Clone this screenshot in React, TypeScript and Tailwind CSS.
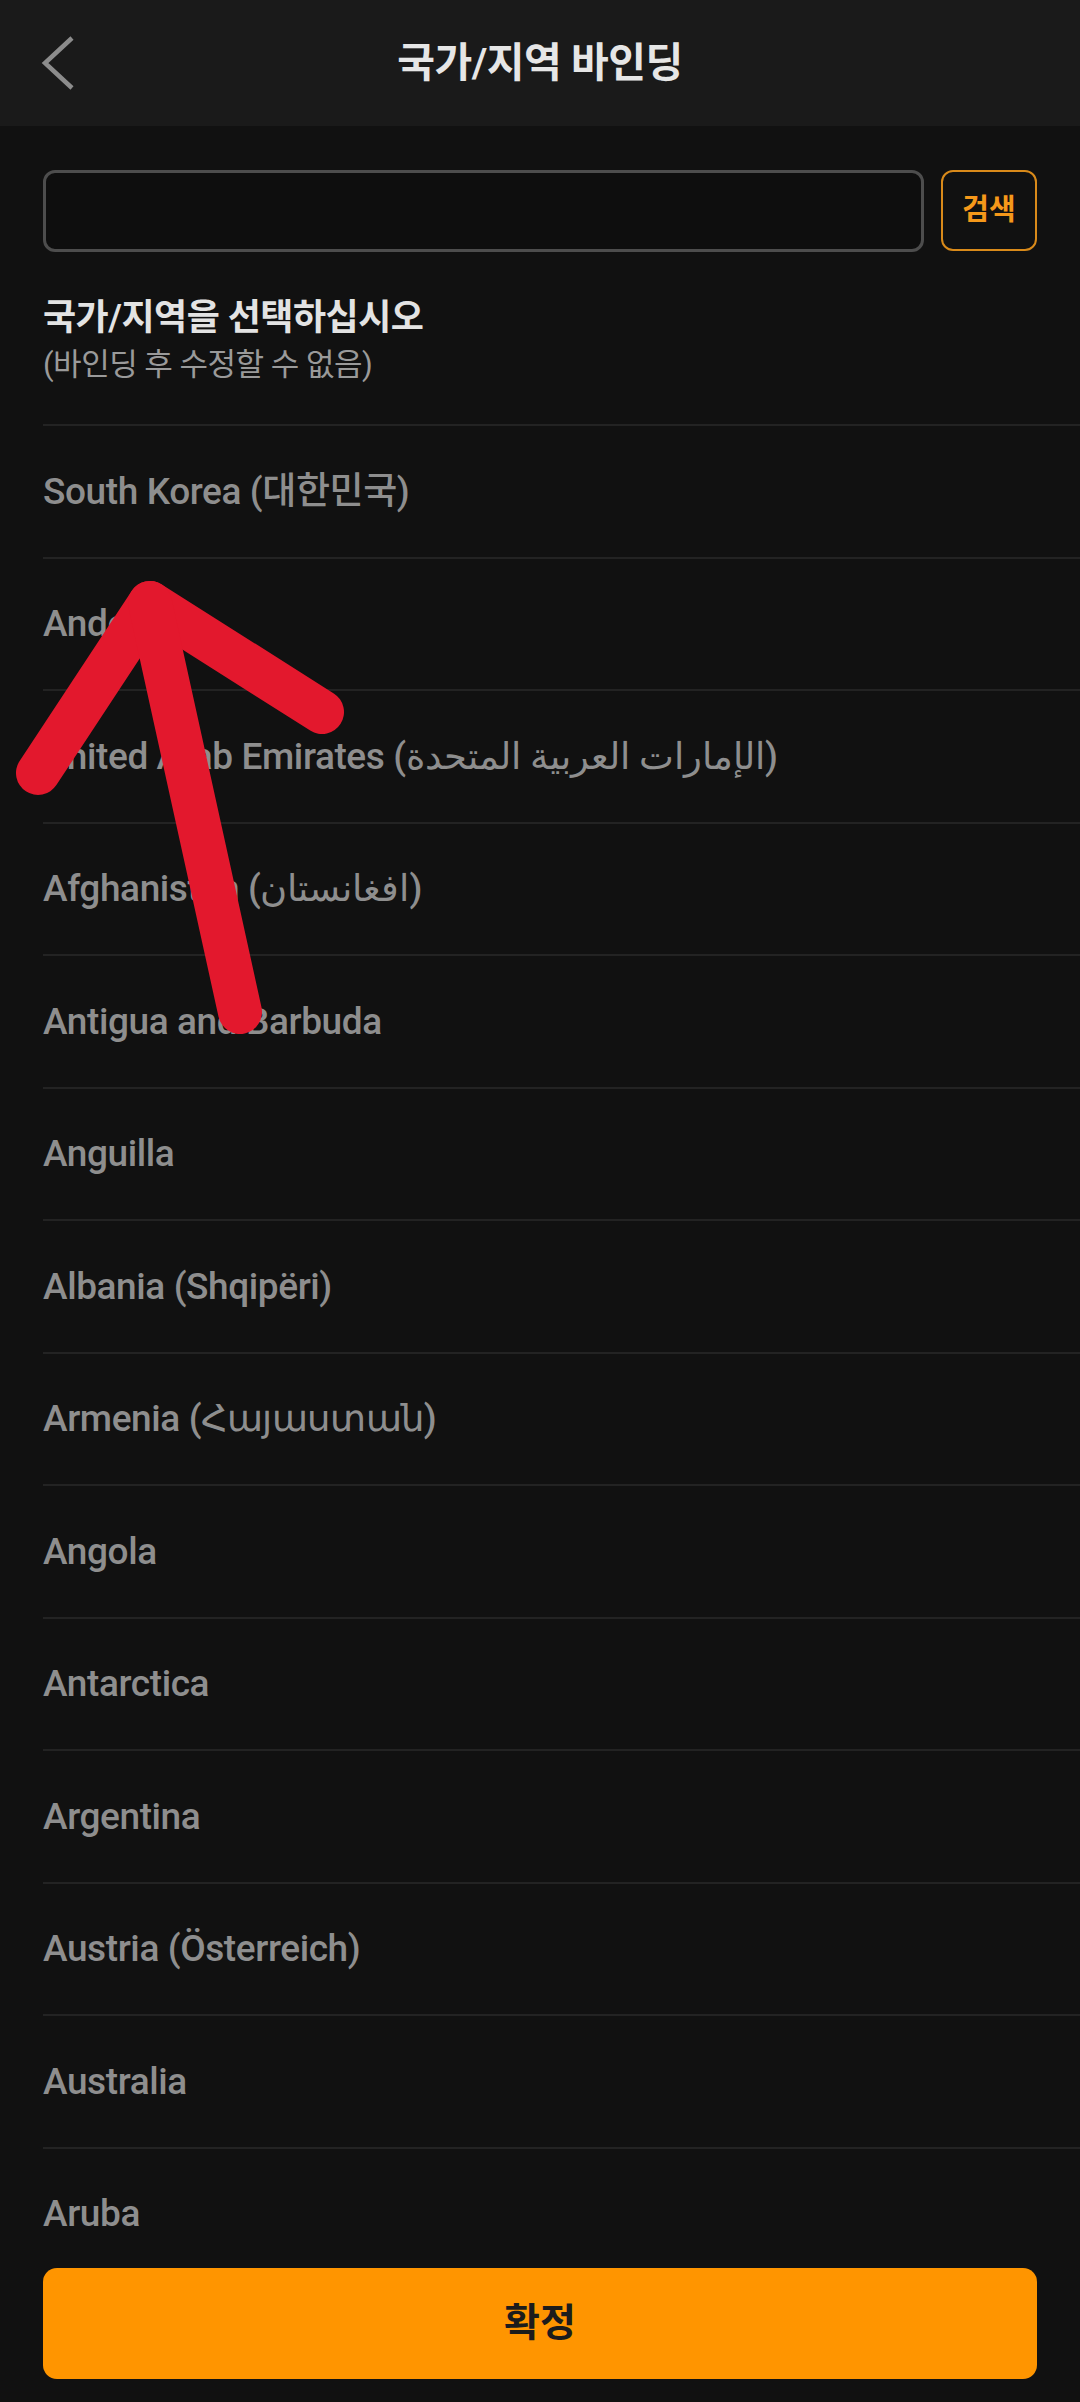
import React from "react";

const countries = [
  "South Korea (대한민국)",
  "Andorra",
  "United Arab Emirates (الإمارات العربية المتحدة)",
  "Afghanistan (افغانستان)",
  "Antigua and Barbuda",
  "Anguilla",
  "Albania (Shqipëri)",
  "Armenia (Հայաստան)",
  "Angola",
  "Antarctica",
  "Argentina",
  "Austria (Österreich)",
  "Australia",
  "Aruba",
];

export default function App() {
  return (
    <div className="relative w-[1080px] h-[2402px] overflow-hidden bg-[#111111] font-['Roboto','Noto_Sans_CJK_KR','Noto_Sans',sans-serif]">
      {/* Header */}
      <div className="grid grid-cols-[1fr_auto_1fr] items-center h-[126px] bg-[#1a1a1a]">
        <div className="pl-[40px] flex items-center">
          <svg width="40" height="56" viewBox="0 0 40 56" fill="none">
            <polyline points="32,3 5,28 32,53" stroke="#8c8c8c" strokeWidth="4.5" strokeLinecap="butt" strokeLinejoin="miter" />
          </svg>
        </div>
        <div className="text-[41px] font-semibold text-[#e6e6e6] leading-none tracking-[-0.5px]">국가/지역 바인딩</div>
        <div />
      </div>

      {/* Search row */}
      <div className="flex gap-[17px] px-[43px] mt-[44px]">
        <div className="flex-1 h-[82px] rounded-[12px] border-[3px] border-[#4d4d4d] bg-[#0e0e0e]" />
        <div className="w-[96px] h-[81px] rounded-[12px] border-2 border-[#d98a1a] flex items-center justify-center text-[29px] font-bold text-[#f5981a]">
          검색
        </div>
      </div>

      {/* Heading */}
      <div className="px-[43px] mt-[45px]">
        <div className="text-[36px] leading-[42px] font-semibold text-[#e3e3e3] tracking-[-0.5px]">국가/지역을 선택하십시오</div>
        <div className="mt-[6px] text-[31px] leading-[40px] text-[#9a9a9a] tracking-[-0.5px]">(바인딩 후 수정할 수 없음)</div>
      </div>

      {/* List */}
      <div className="pl-[43px] mt-[39px]">
        {countries.map((c) => (
          <div key={c} className="h-[132.5px] border-t-2 border-[#232323] flex items-center">
            <span className="text-[37px] font-medium text-[#8e8e8e] tracking-[-0.4px] whitespace-nowrap">{c}</span>
          </div>
        ))}
      </div>

      {/* Confirm button */}
      <div className="absolute left-[43px] right-[43px] bottom-[23px] h-[111px] rounded-[14px] bg-[#ff9500] flex items-center justify-center">
        <span className="text-[39px] font-bold text-[#1c1c1c]">확정</span>
      </div>

      {/* Red annotation arrow */}
      <svg className="absolute left-0 top-0 pointer-events-none" width="1080" height="2402" viewBox="0 0 1080 2402">
        <polyline points="38,773 150,603 322,712" fill="none" stroke="#e3182d" strokeWidth="44" strokeLinecap="round" strokeLinejoin="round" />
        <line x1="240" y1="1012" x2="150" y2="603" stroke="#e3182d" strokeWidth="44" strokeLinecap="round" />
      </svg>
    </div>
  );
}
